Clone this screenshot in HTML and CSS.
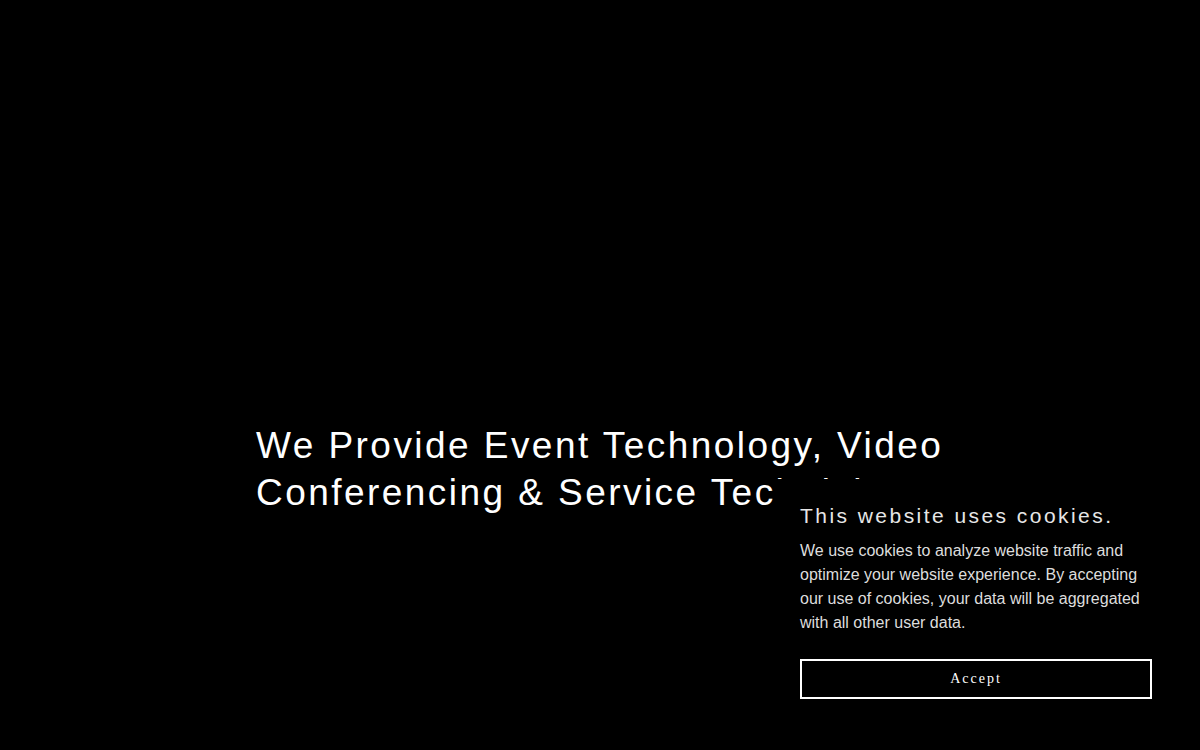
FILE: index.html
```html
<!DOCTYPE html>
<html lang="en">
<head>
<meta charset="utf-8">
<title>Event Technology</title>
<link rel="stylesheet" href="styles.css">
</head>
<body>
<main class="hero">
  <h1 class="hero-title">We Provide Event Technology, Video Conferencing &amp; Service Technicians</h1>
</main>
<aside class="cookie">
  <h2 class="cookie-title">This website uses cookies.</h2>
  <p class="cookie-text">We use cookies to analyze website traffic and optimize your website experience. By accepting our use of cookies, your data will be aggregated with all other user data.</p>
  <button class="cookie-btn">Accept</button>
</aside>
</body>
</html>
```
FILE: styles.css
```css
html, body {
  margin: 0;
  padding: 0;
  background: #000;
  height: 100%;
  overflow: hidden;
}
body {
  font-family: "Liberation Sans", Arial, sans-serif;
  color: #fff;
}
.hero {
  height: 750px;
  padding: 0 0 0 256px;
  box-sizing: border-box;
  display: flex;
  flex-direction: column;
}
.hero-title {
  margin: 422px 0 0 0;
  max-width: 740px;
  font-weight: 400;
  font-size: 37px;
  line-height: 47px;
  letter-spacing: 2.45px;
  color: #fff;
}
.cookie {
  position: fixed;
  left: 776px;
  bottom: 31px;
  width: 352px;
  padding: 24px 24px 20px 24px;
  background: #000;
  color: #ddd;
}
.cookie-title {
  margin: 0;
  font-weight: 400;
  font-size: 21px;
  line-height: 26px;
  letter-spacing: 2.45px;
  color: #e6e6e6;
}
.cookie-text {
  margin: 10px 0 24px 0;
  font-size: 16px;
  line-height: 24px;
  color: #ddd;
}
.cookie-btn {
  display: block;
  width: 100%;
  height: 40px;
  background: #000;
  border: 2px solid #fff;
  color: #fff;
  font-family: "Liberation Serif", "Times New Roman", serif;
  font-size: 14px;
  letter-spacing: 2px;
  cursor: pointer;
}
```
